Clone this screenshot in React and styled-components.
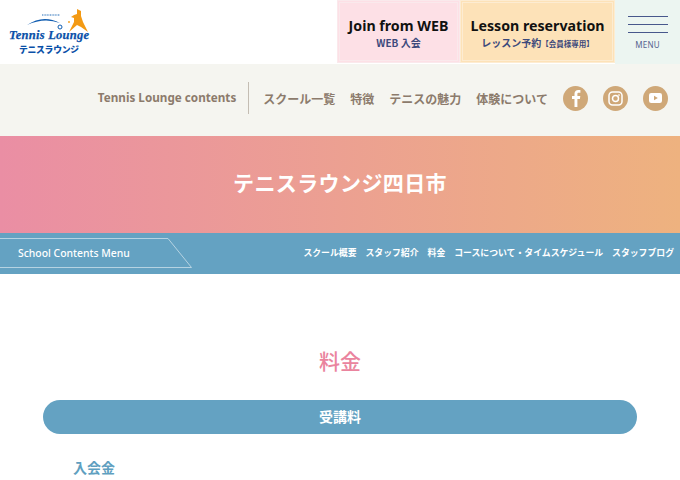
import React from "react";
import styled, { createGlobalStyle } from "styled-components";

const Global = createGlobalStyle`
  html, body { margin: 0; padding: 0; background: #fff; overflow: hidden; }
  body { font-family: "Noto Sans CJK JP", "Noto Sans", sans-serif; }
  * { box-sizing: border-box; }
`;
const Page = styled.div`width: 680px; height: 480px; overflow: hidden;`;
const Header = styled.header`display: flex; height: 64px; background: #fff;`;
const LogoWrap = styled.div`width: 337px; padding: 8px 0 0 8px;`;
const CtaButton = styled.a`
  width: ${p => p.$w}px; height: 63px;
  background: ${p => p.$bg};
  border: 1px solid ${p => p.$line};
  outline: 1px solid ${p => p.$line};
  outline-offset: -3px;
  display: flex; flex-direction: column; align-items: center; justify-content: center;
  color: #111;
`;
const CtaTitle = styled.span`font-size: 14.2px; font-weight: 700; font-family: "Noto Sans", sans-serif; line-height: 20px; margin-top: 3px;`;
const CtaSub = styled.span`font-size: 10px; font-weight: 700; color: #3d4a7c; line-height: 14px; small { font-size: 7.5px; }`;
const MenuBtn = styled.div`
  flex: 1; background: #ecf5f1; display: flex; flex-direction: column; align-items: center; padding-top: 16px;
`;
const Bar = styled.i`display: block; width: 40px; height: 1px; background: #48578c; margin-bottom: 7px;`;
const MenuLabel = styled.span`font-size: 8px; color: #56648f; font-family: "Noto Sans", sans-serif; letter-spacing: .2px; margin-top: -1px;`;
const Nav = styled.nav`
  height: 72px; background: #f5f5f0; display: flex; align-items: center; justify-content: flex-end;
  padding: 0 12px 4px 0; color: #8c7b6c; font-weight: 700;
`;
const NavLead = styled.span`
  font-family: "Noto Sans", sans-serif; font-size: 11.7px; padding-right: 12px; margin-right: 14px; height: 32px; line-height: 30px; border-right: 1px solid #c4bdb3;
`;
const NavLink = styled.a`font-size: 12px; margin-right: ${p => p.$gap ?? 15}px;`;
const Social = styled.a`
  width: 25px; height: 25px; border-radius: 50%; background: #cfa878; margin-left: 15px;
  display: flex; align-items: center; justify-content: center; color: #fff;
`;
const Hero = styled.section`
  height: 97px; background: linear-gradient(90deg, #ea8ea4 0%, #eeb27f 100%);
  display: flex; align-items: center; justify-content: center;
  color: #fff; font-size: 21px; font-weight: 700; padding-bottom: 6px; letter-spacing: .4px;
`;
const SubNav = styled.section`
  height: 41px; background: #64a2c2; display: flex; align-items: center; justify-content: space-between; position: relative;
`;
const SubLabel = styled.div`
  font-family: "Noto Sans", sans-serif; font-size: 10.4px; font-weight: 500; color: #fff; padding-left: 18px; margin-top: -1px;
`;
const Tab = styled.svg`position: absolute; left: 0; top: 0;`;
const SubLinks = styled.div`display: flex; gap: 9px; padding-right: 6px; color: #fff; font-size: 8.85px; font-weight: 700; margin-top: -2px;`;
const Main = styled.main`padding: 0 43px; text-align: center;`;
const Title = styled.h1`
  margin: 73px 0 0; height: 53px; line-height: 27px; font-size: 21px; font-weight: 500; color: #ea849e;
`;
const Pill = styled.div`
  height: 34px; border-radius: 17px; background: #64a2c2; color: #fff; font-size: 14px; font-weight: 700; line-height: 33px;
`;
const Sub = styled.h2`
  margin: 23px 0 0 30px; text-align: left; font-size: 14px; font-weight: 700; color: #5f9fc0; line-height: 20px;
`;

const Logo = () => (
  <svg width="84" height="50" viewBox="0 0 84 50">
    <path d="M19 17 Q35 6 52 15 Q36 9 19 17Z" fill="#0f5cb0" />
    <path d="M34 7h18" stroke="#6f9fd0" strokeWidth="1.6" strokeDasharray="1 .6" />
    <circle cx="52" cy="19" r="2" fill="none" stroke="#0f5cb0" strokeWidth="1" />
    <circle cx="61" cy="14" r=".9" fill="#f39a14" />
    <path d="M69 1L73 3L73 8L75 14L80 24L73 19L69 17L61 24L66 14L66 10L63 9L66 7L69 6Z" fill="#f39a14" />
    <text x="1" y="31" fontFamily="Liberation Serif" fontStyle="italic" fontWeight="700" fontSize="12.5" fill="#0a50a8" stroke="#0a50a8" strokeWidth=".25" textLength="80">Tennis Lounge</text>
    <text x="11" y="45" fontFamily="Noto Sans CJK JP" fontWeight="900" fontSize="8.8" fill="#0a50a8" textLength="60">テニスラウンジ</text>
  </svg>
);

export default function App() {
  return (
    <Page>
      <Global />
      <Header>
        <LogoWrap><Logo /></LogoWrap>
        <CtaButton $w={123} $bg="#fde0e6" $line="#fae9ec">
          <CtaTitle>Join from WEB</CtaTitle>
          <CtaSub>WEB 入会</CtaSub>
        </CtaButton>
        <CtaButton $w={155} $bg="#fde2b8" $line="#fdecd2">
          <CtaTitle>Lesson reservation</CtaTitle>
          <CtaSub>レッスン予約<small>【会員様専用】</small></CtaSub>
        </CtaButton>
        <MenuBtn>
          <Bar /><Bar /><Bar />
          <MenuLabel>MENU</MenuLabel>
        </MenuBtn>
      </Header>
      <Nav>
        <NavLead>Tennis Lounge contents</NavLead>
        <NavLink>スクール一覧</NavLink>
        <NavLink>特徴</NavLink>
        <NavLink>テニスの魅力</NavLink>
        <NavLink $gap={0}>体験について</NavLink>
        <Social>
          <svg width="16" height="18" viewBox="0 0 16 18"><path d="M9.4 18v-8h2.500l.4-3H9.400V5.200c0-.9.3-1.400 1.500-1.400h1.500V1.100C12 1 11.200 1 10.300 1 8 1 6.500 2.300 6.500 4.800V7H4v3h2.500v8z" fill="#fff" /></svg>
        </Social>
        <Social>
          <svg width="15" height="15" viewBox="0 0 15 15" fill="none" stroke="#fff" strokeWidth="1.5"><rect x="1" y="1" width="13" height="13" rx="3.500" /><circle cx="7.500" cy="7.500" r="3" /><circle cx="11" cy="4" r=".6" fill="#fff" strokeWidth=".5" /></svg>
        </Social>
        <Social>
          <svg width="13" height="10" viewBox="0 0 13 10"><rect width="13" height="10" rx="2.200" fill="#fff" /><path d="M5 2.800v4.400L8.800 5z" fill="#cfa878" /></svg>
        </Social>
      </Nav>
      <Hero>テニスラウンジ四日市</Hero>
      <SubNav>
        <Tab width="193" height="41" viewBox="0 0 193 41" fill="none" stroke="#b5d3e2" strokeWidth="1">
          <path d="M0 5.500H168L191.500 34.500H0" />
        </Tab>
        <SubLabel>School Contents Menu</SubLabel>
        <SubLinks>
          <span>スクール概要</span>
          <span>スタッフ紹介</span>
          <span>料金</span>
          <span>コースについて・タイムスケジュール</span>
          <span>スタッフブログ</span>
        </SubLinks>
      </SubNav>
      <Main>
        <Title>料金</Title>
        <Pill>受講料</Pill>
        <Sub>入会金</Sub>
      </Main>
    </Page>
  );
}
